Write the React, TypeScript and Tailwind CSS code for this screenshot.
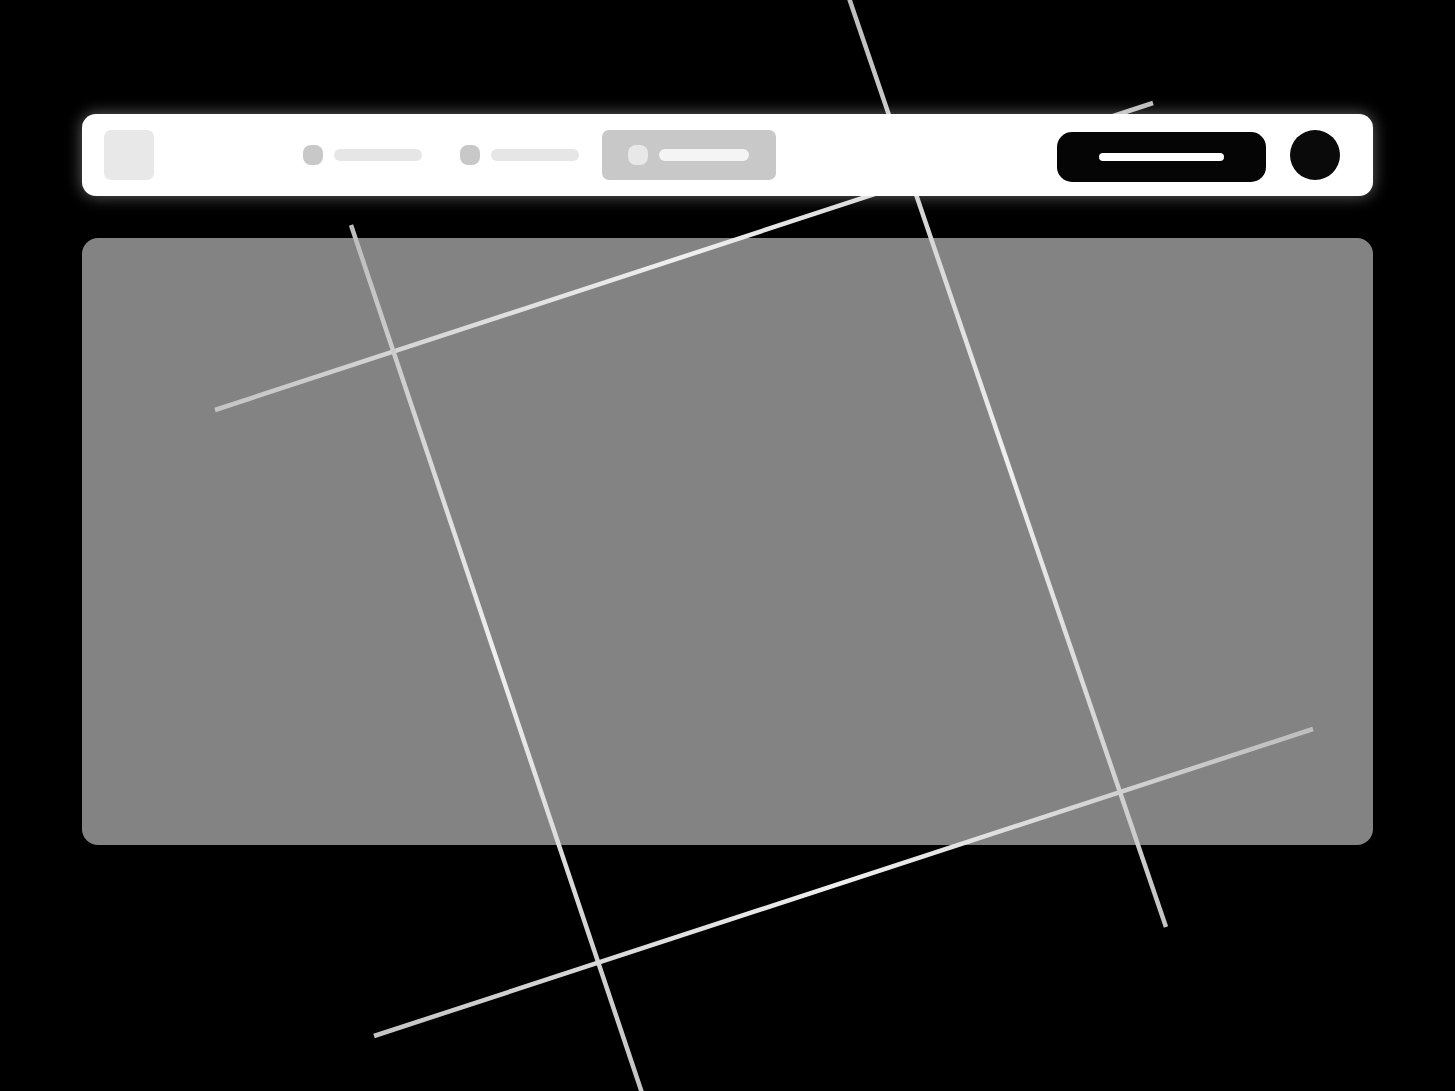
import React from "react";

type Seg = { id: string; x1: number; y1: number; x2: number; y2: number };

const lines: Seg[] = [
  { id: "la", x1: 849, y1: -2, x2: 1166, y2: 927 },
  { id: "lb", x1: 1153, y1: 103, x2: 215, y2: 410 },
  { id: "lc", x1: 351, y1: 225, x2: 642, y2: 1093 },
  { id: "ld", x1: 1313, y1: 729, x2: 374, y2: 1036 },
];

function Lines() {
  return (
    <svg
      className="pointer-events-none absolute left-0 top-0 z-10"
      width="1455"
      height="1091"
      viewBox="0 0 1455 1091"
    >
      <defs>
        {lines.map((l) => (
          <linearGradient
            key={l.id}
            id={`g-${l.id}`}
            gradientUnits="userSpaceOnUse"
            x1={l.x1}
            y1={l.y1}
            x2={l.x2}
            y2={l.y2}
          >
            <stop offset="0" stopColor="#bdbdbd" />
            <stop offset="0.5" stopColor="#efefef" />
            <stop offset="1" stopColor="#c4c4c4" />
          </linearGradient>
        ))}
      </defs>
      {lines.map((l) => (
        <line
          key={l.id}
          x1={l.x1}
          y1={l.y1}
          x2={l.x2}
          y2={l.y2}
          stroke={`url(#g-${l.id})`}
          strokeWidth={4.5}
        />
      ))}
    </svg>
  );
}

function NavItem({ active }: { active?: boolean }) {
  return (
    <div className="flex items-center gap-[11px]">
      <div
        className={
          active
            ? "h-5 w-5 rounded-[8px] bg-[#e8e8e8]"
            : "h-5 w-5 rounded-[8px] bg-[#c8c8c8]"
        }
      />
      <div
        className={
          active
            ? "h-3 w-[90px] rounded-full bg-[#f4f4f4]"
            : "h-3 w-[88px] rounded-full bg-[#e6e6e6]"
        }
      />
    </div>
  );
}

export default function App() {
  return (
    <div className="relative h-[1091px] w-full overflow-hidden bg-black">
      <div className="flex flex-col px-[82px] pt-[114px]">
        <header className="relative z-20 flex h-[82px] w-[1291px] items-center rounded-[14px] bg-white pl-[22px] pr-[33px] shadow-[0_0_16px_rgba(255,255,255,0.4)]">
          <div className="h-[50px] w-[50px] rounded-[7px] bg-[#e8e8e8]" />
          <nav className="ml-[149px] flex items-center">
            <NavItem />
            <div className="ml-[38px]">
              <NavItem />
            </div>
            <div className="ml-[23px] flex h-[50px] w-[174px] items-center rounded-[7px] bg-[#c8c8c8] pl-[26px]">
              <NavItem active />
            </div>
          </nav>
          <div className="ml-auto flex items-center gap-[24px]">
            <button className="mt-[3px] flex h-[50px] w-[209px] items-center justify-center rounded-[15px] bg-[#050505]">
              <span className="h-2 w-[125px] rounded-full bg-white" />
            </button>
            <div className="h-[50px] w-[50px] rounded-full bg-[#0a0a0a]" />
          </div>
        </header>
        <main className="mt-[42px] h-[607px] w-[1291px] rounded-[16px] bg-[#838383]" />
      </div>
      <Lines />
    </div>
  );
}
